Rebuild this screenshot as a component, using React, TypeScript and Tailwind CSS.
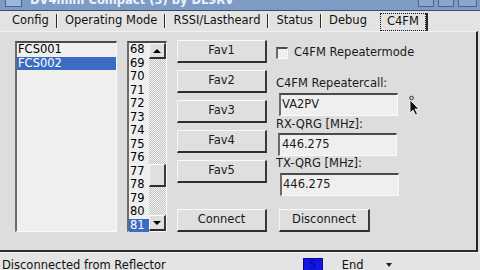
import React from "react";

const raised =
  "border-t border-l border-t-[#fafafa] border-l-[#f4f4f4] border-b-[2px] border-r-[2px] border-b-[#2e2e2e] border-r-[#3a3a3a] bg-[#dfdfdf]";
const sunken =
  "border-t-[2px] border-l-[2px] border-t-[#4a4a4a] border-l-[#6a6a6a] border-b border-r border-b-[#fafafa] border-r-[#fafafa]";

function Btn({ label, className = "" }: { label: string; className?: string }) {
  return (
    <div className={`${raised} h-[23px] flex items-center justify-center text-[#1a1a1a] ${className}`}>
      {label}
    </div>
  );
}

function Sep() {
  return <div className="w-[2px] h-[14px] border-l border-l-[#2a2a2a] border-r border-r-[#fafafa]" />;
}

function Tab({ label }: { label: string }) {
  return <div className="px-[7px] text-[#111]">{label}</div>;
}

export default function App() {
  const nums = Array.from({ length: 14 }, (_, i) => 68 + i);
  return (
    <div className="relative w-[480px] h-[270px] overflow-hidden bg-[#dedede] font-['DejaVu_Sans',sans-serif] text-[11.5px] text-black flex flex-col">
      {/* Title bar */}
      <div className="h-[11px] shrink-0 bg-[#7e9bc6] border-b border-b-[#3c4d68] flex items-end overflow-hidden">
        <div className="ml-[5px] mb-[3px] w-[17px] h-[9px] bg-[#9db6da] border border-[#4b6390]" />
        <div className="ml-[8px] mb-[4px] leading-[11px] text-[11.5px] font-bold text-[#eef3fa] whitespace-nowrap">
          DV4mini Compact (3) by DL9RV
        </div>
        <div className="ml-auto flex items-end gap-[4px] mr-[3px] mb-[3px]">
          <div className="w-[16px] h-[9px] bg-[#8aa6cf] border border-[#4a6290]" />
          <div className="w-[16px] h-[9px] bg-[#8aa6cf] border border-[#4a6290]" />
          <div className="w-[19px] h-[9px] bg-[#8aa6cf] border border-[#4a6290]" />
        </div>
      </div>

      {/* Tab bar */}
      <div className="h-[20px] shrink-0 bg-[#e3e3e3] flex items-center pl-[5px]">
        <Tab label="Config" />
        <Sep />
        <Tab label="Operating Mode" />
        <Sep />
        <Tab label="RSSI/Lastheard" />
        <Sep />
        <Tab label="Status" />
        <Sep />
        <Tab label="Debug" />
        <div className="ml-[6px] h-[18px] self-end flex items-stretch">
          <div className="border border-dotted border-[#111] px-[6px] flex items-center text-[#111]">C4FM</div>
          <div className="w-[2px] bg-[#2a2a2a]" />
        </div>
      </div>

      {/* Panel */}
      <div className="h-[221px] shrink-0 mr-[2px] border-t border-t-[#f2f2f2] border-r-[2px] border-r-[#262626] border-b-[2px] border-b-[#2c2c2c] bg-[#dddddd] flex items-start pl-[15px] pt-[8px]">
        {/* FCS list */}
        <div className={`${sunken} mt-[1px] w-[102px] h-[191px] shrink-0 bg-[#efefef] flex flex-col`}>
          <div className="h-[13.5px] leading-[13.5px] px-[1px]">FCS001</div>
          <div className="h-[13.5px] leading-[13.5px] px-[1px] bg-[#3b6cc2] text-white">FCS002</div>
        </div>

        {/* Number list */}
        <div className={`${sunken} ml-[10px] mt-[1px] w-[40px] h-[191px] shrink-0 bg-[#efefef] flex`}>
          <div className="flex-1 flex flex-col">
            {nums.map((n) => (
              <div
                key={n}
                className={`h-[13.5px] leading-[13.5px] pl-[1px] ${n === 81 ? "bg-[#3b6cc2] text-white" : ""}`}
              >
                {n}
              </div>
            ))}
          </div>
          <div className="w-[17px] flex flex-col bg-[repeating-conic-gradient(#c4c4c4_0_25%,#f2f2f2_0_50%)] bg-[length:2px_2px]">
            <div className={`${raised} h-[16px] flex items-center justify-center`}>
              <div className="w-0 h-0 border-l-[4px] border-r-[4px] border-b-[4px] border-l-transparent border-r-transparent border-b-black" />
            </div>
            <div className="h-[105px]" />
            <div className={`${raised} h-[23px]`} />
            <div className="flex-1" />
            <div className={`${raised} h-[16px] flex items-center justify-center`}>
              <div className="w-0 h-0 border-l-[4px] border-r-[4px] border-t-[4px] border-l-transparent border-r-transparent border-t-black" />
            </div>
          </div>
        </div>

        {/* Fav buttons */}
        <div className="ml-[10px] w-[90px] shrink-0 flex flex-col gap-[7px]">
          <Btn label="Fav1" />
          <Btn label="Fav2" />
          <Btn label="Fav3" />
          <Btn label="Fav4" />
          <Btn label="Fav5" />
          <Btn label="Connect" className="mt-[19px]" />
        </div>

        {/* Right column */}
        <div className="ml-[9px] w-[124px] shrink-0 flex flex-col text-[#1a1a1a]">
          <div className="mt-[7px] h-[12px] flex items-center">
            <div className={`${sunken} w-[12px] h-[12px] shrink-0 bg-[#efefef]`} />
            <div className="ml-[6px] whitespace-nowrap">C4FM Repeatermode</div>
          </div>
          <div className="mt-[17px] h-[14px] leading-[14px] whitespace-nowrap">C4FM Repeatercall:</div>
          <div className={`${sunken} mt-[3px] ml-[3px] w-[119px] h-[23px] bg-[#efefef] flex items-center pl-[1px]`}>
            VA2PV
          </div>
          <div className="mt-[1px] h-[14px] leading-[14px] whitespace-nowrap">RX-QRG [MHz]:</div>
          <div className={`${sunken} mt-[2px] ml-[2px] w-[119px] h-[23px] bg-[#efefef] flex items-center pl-[2px]`}>
            446.275
          </div>
          <div className="h-[14px] leading-[14px] whitespace-nowrap">TX-QRG [MHz]:</div>
          <div className={`${sunken} mt-[3px] ml-[4px] w-[119px] h-[23px] bg-[#efefef] flex items-center pl-[1px]`}>
            446.275
          </div>
          <Btn label="Disconnect" className="mt-[13px] ml-[3px] w-[91px]" />
        </div>
      </div>

      {/* Status bar */}
      <div className="h-[18px] shrink-0 border-t border-t-[#f6f6f6] bg-[#e4e4e4] flex items-end overflow-hidden">
        <div className="pl-[2px] mb-[-1px] leading-[11.5px] whitespace-nowrap text-[#111]">
          Disconnected from Reflector
        </div>
        <div className="ml-[137px] mb-[-3px] w-[20px] h-[15px] bg-[#1414e6] border border-[#0a0a80] flex items-start justify-center text-[10px] leading-[12px] text-[#06068a]">
          S
        </div>
        <div className="ml-[19px] mb-[-1px] leading-[11.5px] text-[#111]">End</div>
        <div className="ml-[22px] mb-[3px] w-0 h-0 border-l-[3px] border-r-[3px] border-t-[4px] border-l-transparent border-r-transparent border-t-[#222]" />
      </div>

      {/* Mouse cursor overlay */}
      <svg className="absolute left-[407px] top-[95px]" width="16" height="22" viewBox="0 0 16 22">
        <circle cx="4.5" cy="3" r="1.8" fill="none" stroke="#333" strokeWidth="1" />
        <path d="M3 5 L3 18 L6 15 L8.5 20 L10.5 19 L8 14 L12 14 Z" fill="#111" stroke="#fff" strokeWidth="0.8" />
      </svg>
    </div>
  );
}
